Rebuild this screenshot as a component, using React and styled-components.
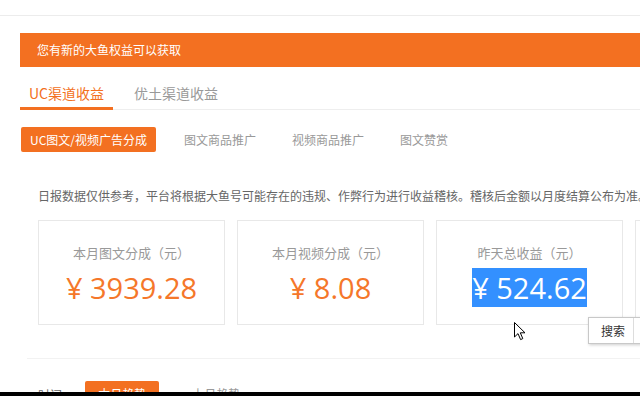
import styled, { createGlobalStyle } from 'styled-components';

const ORANGE = '#f37021';

const GlobalStyle = createGlobalStyle`
  html, body {
    margin: 0;
    padding: 0;
    background: #fff;
    overflow: hidden;
    height: 396px;
  }
  body {
    font-family: "Noto Sans CJK SC", "Noto Sans", sans-serif;
    color: #666;
  }
`;

const Page = styled.div`
  position: relative;
  width: 760px;
  height: 396px;
  overflow: hidden;
`;

const TopBar = styled.div`
  height: 15px;
  border-bottom: 1px solid #ececec;
`;

const Main = styled.div`
  padding: 17px 0 0 20px;
`;

const Banner = styled.div`
  height: 34px;
  line-height: 34px;
  padding-left: 17px;
  background: ${ORANGE};
  color: #fff;
  font-size: 12px;
`;

const TabBar = styled.div`
  display: flex;
  margin-top: 16px;
  border-bottom: 1px solid #eee;
  gap: 12px;
`;

const Tab = styled.div`
  padding: 0 9px 4px;
  line-height: 20px;
  font-size: 14px;
  color: ${({ active }) => (active ? ORANGE : '#999')};
  border-bottom: 3px solid ${({ active }) => (active ? ORANGE : 'transparent')};
  margin-bottom: -1px;
`;

const SubTabs = styled.div`
  display: flex;
  align-items: center;
  margin-top: 17px;
  margin-left: 1px;
`;

const SubTab = styled.div`
  height: 25px;
  line-height: 25px;
  font-size: 12px;
  padding: ${({ active }) => (active ? '0 9px' : '0 18px')};
  margin-right: ${({ active }) => (active ? '10px' : '0')};
  border-radius: 2px;
  background: ${({ active }) => (active ? ORANGE : 'transparent')};
  color: ${({ active }) => (active ? '#fff' : '#999')};
  white-space: nowrap;
`;

const Panel = styled.div`
  padding-left: 18px;
`;

const Notice = styled.p`
  margin: 35px 0 0;
  font-size: 12px;
  line-height: 18px;
  color: #666;
  white-space: nowrap;
`;

const Cards = styled.div`
  display: flex;
  gap: 12px;
  margin-top: 15px;
`;

const Card = styled.div`
  flex: 0 0 187px;
  box-sizing: border-box;
  height: 105px;
  border: 1px solid #e8e8e8;
  padding-top: 22px;
  text-align: center;
`;

const Label = styled.div`
  font-size: 13px;
  line-height: 20px;
  color: #999;
`;

const Value = styled.div`
  margin-top: 6px;
  font-family: "Open Sans", "Noto Sans CJK SC", sans-serif;
  font-size: 29px;
  line-height: 38px;
  color: #f5772a;

  span {
    background: ${({ selected }) => (selected ? '#3390ff' : 'transparent')};
    color: ${({ selected }) => (selected ? '#fff' : 'inherit')};
  }
`;

const Divider = styled.div`
  margin: 33px 0 0 7px;
  border-top: 1px solid #f2f2f2;
`;

const TimeRow = styled.div`
  display: flex;
  align-items: center;
  margin: 22px 0 0 18px;
  font-size: 12px;
`;

const TimeLabel = styled.span`
  color: #666;
  margin-right: 20px;
`;

const TrendButton = styled.div`
  width: 74px;
  height: 26px;
  line-height: 26px;
  text-align: center;
  border-radius: 2px;
  background: ${({ active }) => (active ? ORANGE : 'transparent')};
  color: ${({ active }) => (active ? '#fff' : '#999')};
  margin-right: 20px;
`;

const ContextMenu = styled.div`
  position: absolute;
  left: 588px;
  top: 317px;
  height: 25px;
  width: 90px;
  display: flex;
  background: #fff;
  border: 1px solid #c8c8c8;
  box-shadow: 1px 1px 3px rgba(0, 0, 0, 0.2);
  font-size: 12px;
  color: #333;
`;

const MenuItem = styled.div`
  padding: 0 8px 0 12px;
  line-height: 25px;
  border-right: 1px solid #ddd;
`;

const Cursor = styled.svg`
  position: absolute;
  left: 514px;
  top: 322px;
`;

const BottomEdge = styled.div`
  position: absolute;
  left: 0;
  right: 0;
  bottom: 0;
  height: 4px;
  background: #000;
`;

const cards = [
  { label: '本月图文分成（元）', value: '¥ 3939.28' },
  { label: '本月视频分成（元）', value: '¥ 8.08' },
  { label: '昨天总收益（元）', value: '¥ 524.62', selected: true },
  { label: '本月总收益（元）', value: '¥ 0.00' },
];

const subTabs = ['UC图文/视频广告分成', '图文商品推广', '视频商品推广', '图文赞赏'];

export default function App() {
  return (
    <>
      <GlobalStyle />
      <Page>
        <TopBar />
        <Main>
          <Banner>您有新的大鱼权益可以获取</Banner>
          <TabBar>
            <Tab active>UC渠道收益</Tab>
            <Tab>优土渠道收益</Tab>
          </TabBar>
          <SubTabs>
            {subTabs.map((t, i) => (
              <SubTab key={t} active={i === 0}>{t}</SubTab>
            ))}
          </SubTabs>
          <Panel>
            <Notice>
              日报数据仅供参考，平台将根据大鱼号可能存在的违规、作弊行为进行收益稽核。稽核后金额以月度结算公布为准。
            </Notice>
            <Cards>
              {cards.map((c) => (
                <Card key={c.label}>
                  <Label>{c.label}</Label>
                  <Value selected={c.selected}>
                    <span>{c.value}</span>
                  </Value>
                </Card>
              ))}
            </Cards>
          </Panel>
          <Divider />
          <TimeRow>
            <TimeLabel>时间:</TimeLabel>
            <TrendButton active>本月趋势</TrendButton>
            <TrendButton>上月趋势</TrendButton>
          </TimeRow>
        </Main>
        <ContextMenu>
          <MenuItem>搜索</MenuItem>
        </ContextMenu>
        <Cursor width="12" height="19" viewBox="0 0 12 19">
          <path
            d="M0.5 0.5 L0.5 15 L4 11.6 L6.6 17.6 L8.8 16.6 L6.3 10.8 L11 10.8 Z"
            fill="#fff"
            stroke="#000"
            strokeWidth="1"
            strokeLinejoin="round"
          />
        </Cursor>
        <BottomEdge />
      </Page>
    </>
  );
}
